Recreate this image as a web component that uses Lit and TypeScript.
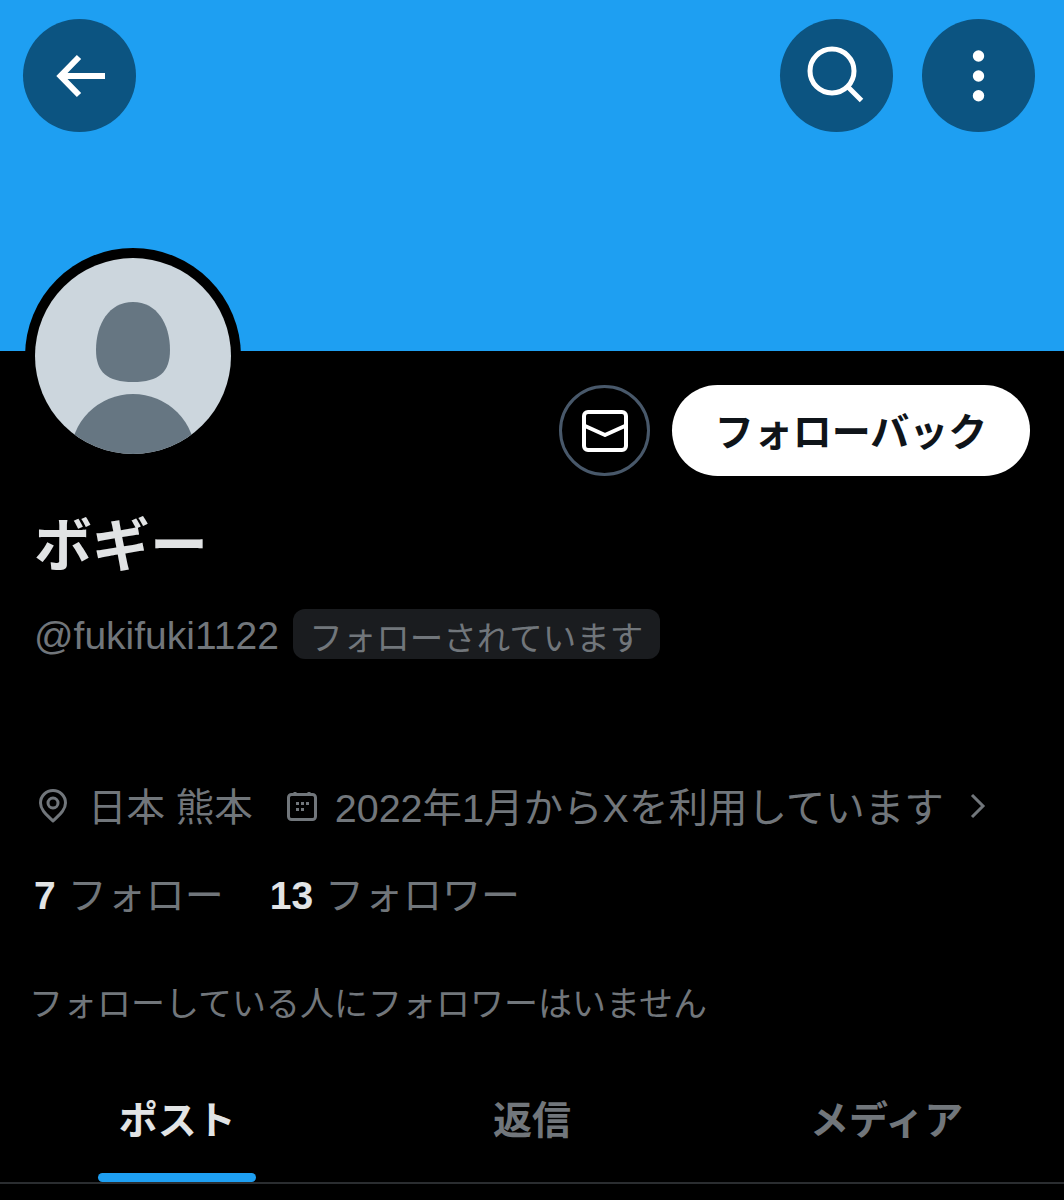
import { LitElement, html, css } from "lit";
import { customElement } from "lit/decorators.js";

@customElement("app-root")
export class AppRoot extends LitElement {
  static styles = css`
    :host { display: block; width: 1064px; height: 1200px; overflow: hidden; background: #000;
      font-family: "Liberation Sans", "Noto Sans CJK JP", sans-serif; color: #71767b; }
    svg { display: block; }
    .banner { height: 351px; background: #1e9ff2; box-sizing: border-box; padding: 19px 29px 0 23px;
      display: flex; justify-content: space-between; align-items: flex-start; }
    .right { display: flex; gap: 29px; }
    .round { width: 113px; height: 113px; border-radius: 50%; background: #0c5481; }
    .top { display: flex; justify-content: space-between; align-items: flex-start; padding: 0 34px 0 25px; }
    .avatar { width: 216px; height: 216px; margin-top: -103px; border-radius: 50%; background: #000; box-sizing: border-box; padding: 10px; }
    .avatar svg { border-radius: 50%; }
    .actions { display: flex; gap: 22px; margin-top: 34px; }
    .msg { width: 91px; height: 91px; box-sizing: border-box; border: 3px solid #48586a; border-radius: 50%; display: flex; align-items: center; justify-content: center; }
    .follow { width: 358px; height: 91px; box-sizing: border-box; padding-bottom: 4px; border-radius: 46px; background: #fff; color: #0f1419; font-size: 39px; font-weight: 700; display: flex; align-items: center; justify-content: center; }
    .name { margin: 40px 0 0 34px; font-size: 58px; line-height: 60px; font-weight: 700; color: #e1e3e4; }
    .handle-row { display: flex; align-items: center; margin: 33px 0 0 34px; gap: 14px; height: 50px; }
    .handle { font-size: 39px; color: #71767b; padding-top: 4px; }
    .badge { height: 50px; width: 367px; box-sizing: border-box; display: flex; align-items: center; justify-content: center; padding-top: 2px; background: #1a1c1f; border-radius: 12px; font-size: 33.5px; color: #71767b; }
    .meta { display: flex; align-items: center; margin: 120px 0 0 38px; height: 50px; font-size: 38.5px; }
    .meta svg { margin-top: 4px; }
    .meta .t1 { margin-left: 20px; }
    .meta .cal { margin-left: 34px; }
    .meta .t2 { margin-left: 18px; font-size: 39.5px; }
    .meta .chev { margin-left: 24px; }
    .stats { display: flex; align-items: baseline; margin: 35px 0 0 34px; height: 50px; font-size: 39px; }
    .stats b { color: #e2e4e5; }
    .stats span.l { margin-left: 12px; }
    .stats b.second { margin-left: 46px; }
    .known { margin: 65px 0 0 29px; font-size: 34px; line-height: 50px; }
    .tabs { display: grid; grid-template-columns: repeat(3, 1fr); margin-top: 42px; height: 111px; border-bottom: 2px solid #2a2d30; box-sizing: content-box; }
    .tab { display: flex; flex-direction: column; align-items: center; justify-content: space-between; font-size: 39px; font-weight: 700; line-height: 50px; color: #71767b; padding: 25px 0 0; box-sizing: border-box; }
    .tab.on { color: #e2e4e5; }
    .bar { width: 158px; height: 9px; border-radius: 5px; background: #1e9ff2; }
  `;

  render() {
    return html`
      <div class="banner">
        <div class="round">
          <svg width="113" height="113" viewBox="0 0 113 113" fill="none" stroke="#fff" stroke-width="6">
            <path d="M82 57H38M56 38L37.500 57L56 76" />
          </svg>
        </div>
        <div class="right">
          <div class="round">
            <svg width="113" height="113" viewBox="0 0 113 113" fill="none" stroke="#fff" stroke-width="5">
              <circle cx="52" cy="52" r="22" />
              <path d="M67 67L81.500 81.500" />
            </svg>
          </div>
          <div class="round">
            <svg width="113" height="113" viewBox="0 0 113 113" fill="#fff">
              <circle cx="56.500" cy="37" r="5.700" /><circle cx="56.500" cy="57" r="5.700" /><circle cx="56.500" cy="76.700" r="5.700" />
            </svg>
          </div>
        </div>
      </div>

      <div class="top">
        <div class="avatar">
          <svg width="196" height="196" viewBox="0 0 196 196">
            <rect width="196" height="196" fill="#ccd6dd" />
            <path d="M98 44C122 44 135 66 135 92C135 114 124 124 98 124C72 124 61 114 61 92C61 66 74 44 98 44Z" fill="#667682" />
            <circle cx="98" cy="198.600" r="62.600" fill="#667682" />
          </svg>
        </div>
        <div class="actions">
          <div class="msg">
            <svg width="46" height="42" viewBox="0 0 46 42" fill="none" stroke="#fff" stroke-width="4" stroke-linejoin="round">
              <rect x="2" y="2" width="42" height="38" rx="4" />
              <path d="M2 15.500L23 25L44 15.500" />
            </svg>
          </div>
          <div class="follow">フォローバック</div>
        </div>
      </div>

      <div class="name">ボギー</div>
      <div class="handle-row">
        <span class="handle">@fukifuki1122</span>
        <span class="badge">フォローされています</span>
      </div>

      <div class="meta">
        <svg width="30" height="34" viewBox="0 0 30 34" fill="none" stroke="#71767b" stroke-width="3">
          <path d="M15 32C9 26 2.500 21 2.500 14A12.500 12.500 0 0 1 27.500 14C27.500 21 21 26 15 32Z" stroke-linejoin="round" />
          <circle cx="15" cy="14" r="5" />
        </svg>
        <span class="t1">日本 熊本</span>
        <svg class="cal" width="30" height="30" viewBox="0 0 30 30" fill="none" stroke="#71767b" stroke-width="3">
          <rect x="1.500" y="3.500" width="27" height="25" rx="3" />
          <path d="M8 1V5M22 1V5" />
          <g fill="#71767b" stroke="none">
            <rect x="9" y="11" width="3" height="3" /><rect x="14" y="11" width="3" height="3" /><rect x="19" y="11" width="3" height="3" />
            <rect x="9" y="17" width="3" height="3" /><rect x="14" y="17" width="3" height="3" />
          </g>
        </svg>
        <span class="t2">2022年1月からXを利用しています</span>
        <svg class="chev" width="20" height="30" viewBox="0 0 20 30" fill="none" stroke="#71767b" stroke-width="3">
          <path d="M4 4L15 15L4 26" />
        </svg>
      </div>

      <div class="stats">
        <b>7</b><span class="l">フォロー</span>
        <b class="second">13</b><span class="l">フォロワー</span>
      </div>

      <div class="known">フォローしている人にフォロワーはいません</div>

      <div class="tabs">
        <div class="tab on"><span>ポスト</span><div class="bar"></div></div>
        <div class="tab"><span>返信</span></div>
        <div class="tab"><span>メディア</span></div>
      </div>
    `;
  }
}
